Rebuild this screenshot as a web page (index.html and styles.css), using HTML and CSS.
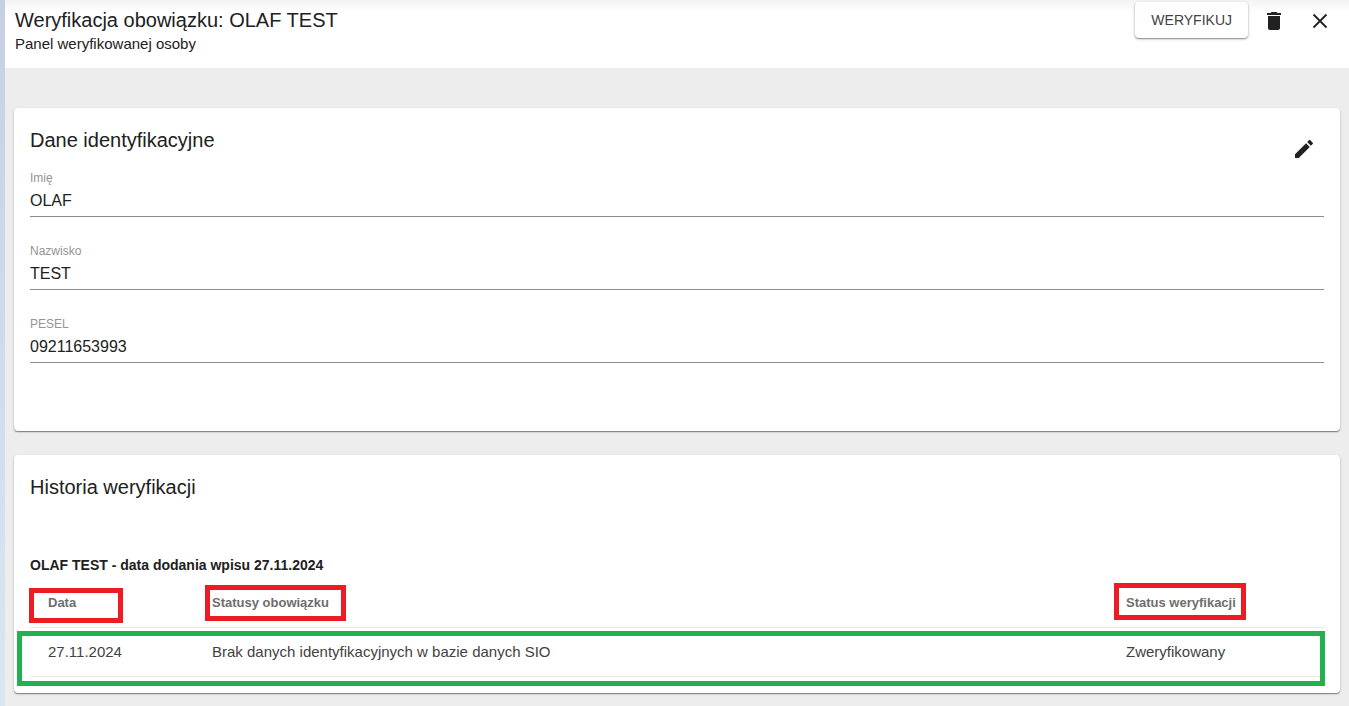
FILE: index.html
```html
<!DOCTYPE html>
<html lang="pl">
<head>
    <meta charset="UTF-8">
    <meta name="viewport" content="width=device-width, initial-scale=1.0">
    <title>Weryfikacja obowiązku</title>
    <link rel="stylesheet" href="styles.css">
</head>
<body>

<div class="panel">
    <!-- Header -->
    <header class="toolbar">
        <div class="toolbar-titles">
            <h1>Weryfikacja obowiązku: OLAF TEST</h1>
            <p>Panel weryfikowanej osoby</p>
        </div>
        <div class="toolbar-actions">
            <button type="button" class="btn-raised">WERYFIKUJ</button>
            <button type="button" class="btn-icon" aria-label="Usuń">
                <svg viewBox="0 0 24 24"><path d="M6 19c0 1.1.9 2 2 2h8c1.1 0 2-.9 2-2V7H6v12zM19 4h-3.5l-1-1h-5l-1 1H5v2h14V4z"/></svg>
            </button>
            <button type="button" class="btn-icon" aria-label="Zamknij">
                <svg viewBox="0 0 24 24"><path d="M5.5 5.5l13 13M18.5 5.5l-13 13" stroke="#212121" stroke-width="1.8"/></svg>
            </button>
        </div>
    </header>

    <main class="content">
        <!-- Person data -->
        <section class="card">
            <div class="card-head">
                <h2>Dane identyfikacyjne</h2>
                <button type="button" class="btn-icon" aria-label="Edytuj">
                    <svg viewBox="0 0 24 24"><path d="M3 17.25V21h3.75L17.81 9.94l-3.75-3.75L3 17.25zM20.71 7.04c.39-.39.39-1.02 0-1.41l-2.34-2.34c-.39-.39-1.02-.39-1.41 0l-1.83 1.83 3.75 3.75 1.83-1.83z"/></svg>
                </button>
            </div>
            <div class="fields">
                <div class="field">
                    <label for="imie">Imię</label>
                    <input type="text" id="imie" value="OLAF" readonly>
                </div>
                <div class="field">
                    <label for="nazwisko">Nazwisko</label>
                    <input type="text" id="nazwisko" value="TEST" readonly>
                </div>
                <div class="field">
                    <label for="pesel">PESEL</label>
                    <input type="text" id="pesel" value="09211653993" readonly>
                </div>
            </div>
        </section>

        <!-- Verification history -->
        <section class="card card-history">
            <h2>Historia weryfikacji</h2>
            <h3>OLAF TEST - data dodania wpisu 27.11.2024</h3>
            <div class="table-wrap">
                <table>
                    <thead>
                        <tr>
                            <th class="col-date"><span class="marked">Data<i class="mark mark-date"></i></span></th>
                            <th><span class="marked">Statusy obowiązku<i class="mark mark-duty"></i></span></th>
                            <th class="col-status"><span class="marked">Status weryfikacji<i class="mark mark-status"></i></span></th>
                        </tr>
                    </thead>
                    <tbody>
                        <tr>
                            <td>27.11.2024</td>
                            <td>Brak danych identyfikacyjnych w bazie danych SIO</td>
                            <td>Zweryfikowany</td>
                        </tr>
                    </tbody>
                </table>
                <i class="mark mark-row"></i>
            </div>
        </section>
    </main>
</div>

</body>
</html>
```
FILE: styles.css
```css
* {
    box-sizing: border-box;
}
body {
    margin: 0;
    padding-left: 5px;
    min-height: 100vh;
    font-family: "Liberation Sans", Arial, sans-serif;
    color: #212121;
    background: linear-gradient(#c7d0e3, #dbe5f3);
}
h1, h2, h3, p {
    margin: 0;
}
.panel {
    min-height: 100vh;
    background-color: #ededed;
}

/* Header */
.toolbar {
    display: flex;
    justify-content: space-between;
    min-height: 68px;
    padding: 2px 9px 0 10px;
    background: linear-gradient(#f3f3f3, #fff 12px);
}
.toolbar-titles {
    padding-top: 6px;
}
.toolbar h1 {
    font-size: 20px;
    font-weight: 400;
    line-height: 24px;
}
.toolbar p {
    font-size: 15px;
    line-height: 24px;
}
.toolbar-actions {
    display: flex;
    align-items: flex-start;
    gap: 6px;
}
button {
    border: none;
    color: #424242;
    font-family: inherit;
    cursor: pointer;
}
.btn-raised {
    height: 36px;
    padding: 0 16px;
    border-radius: 4px;
    background-color: #fff;
    font-size: 14px;
    box-shadow: 0 1px 3px rgba(0, 0, 0, 0.3), 0 1px 1px rgba(0, 0, 0, 0.25);
}
.btn-icon {
    width: 40px;
    height: 38px;
    padding: 7px 8px;
    background: none;
}
.btn-icon svg {
    display: block;
    width: 24px;
    height: 24px;
    fill: #212121;
}

/* Cards */
.content {
    display: flex;
    flex-direction: column;
    gap: 24px;
    padding: 40px 9px 13px;
}
.card {
    padding: 16px 16px 68px;
    border-radius: 4px;
    background-color: #fff;
    box-shadow: 0 1px 1px rgba(0, 0, 0, 0.4), 0 1px 3px rgba(0, 0, 0, 0.15);
}
.card-head {
    display: flex;
    justify-content: space-between;
    height: 46px;
}
.card-head .btn-icon {
    margin-top: 6px;
}
h2 {
    font-size: 20px;
    font-weight: 400;
    line-height: 32px;
}

/* Form fields */
.fields {
    display: flex;
    flex-direction: column;
    gap: 26px;
}
.field label {
    display: block;
    font-size: 12px;
    line-height: 16px;
    color: #949494;
}
.field input {
    display: block;
    width: 100%;
    height: 31px;
    padding: 0 0 1px;
    border: none;
    border-bottom: 1px solid #8c8c8c;
    outline: none;
    background: none;
    font-family: inherit;
    font-size: 16px;
    color: #212121;
}

/* History table */
.card-history {
    padding-bottom: 16px;
}
h3 {
    margin-top: 52px;
    font-size: 14px;
    line-height: 20px;
}
.table-wrap {
    position: relative;
    margin-top: 3px;
}
table {
    width: 100%;
    border-collapse: collapse;
    table-layout: fixed;
}
th, td {
    height: 49px;
    padding: 0;
    border-bottom: 1px solid #e8e8e8;
    text-align: left;
}
th:first-child, td:first-child {
    padding-left: 18px;
}
th {
    font-size: 13px;
    color: #6e6e6e;
}
td {
    font-size: 15px;
    color: #424242;
}
.col-date {
    width: 182px;
}
.col-status {
    width: 198px;
}

/* Coloured frames drawn over the table */
.marked {
    position: relative;
}
.mark {
    position: absolute;
    border: 5px solid #ed1c24;
    pointer-events: none;
}
.mark-date {
    top: -7px;
    left: -19px;
    width: 94px;
    height: 35px;
}
.mark-duty {
    top: -10px;
    left: -7px;
    right: -17px;
    height: 36px;
}
.mark-status {
    top: -12px;
    left: -12px;
    right: -10px;
    height: 37px;
}
.mark-row {
    top: 53px;
    left: -13px;
    right: -1px;
    height: 55px;
    border-color: #22b14c;
}
```
